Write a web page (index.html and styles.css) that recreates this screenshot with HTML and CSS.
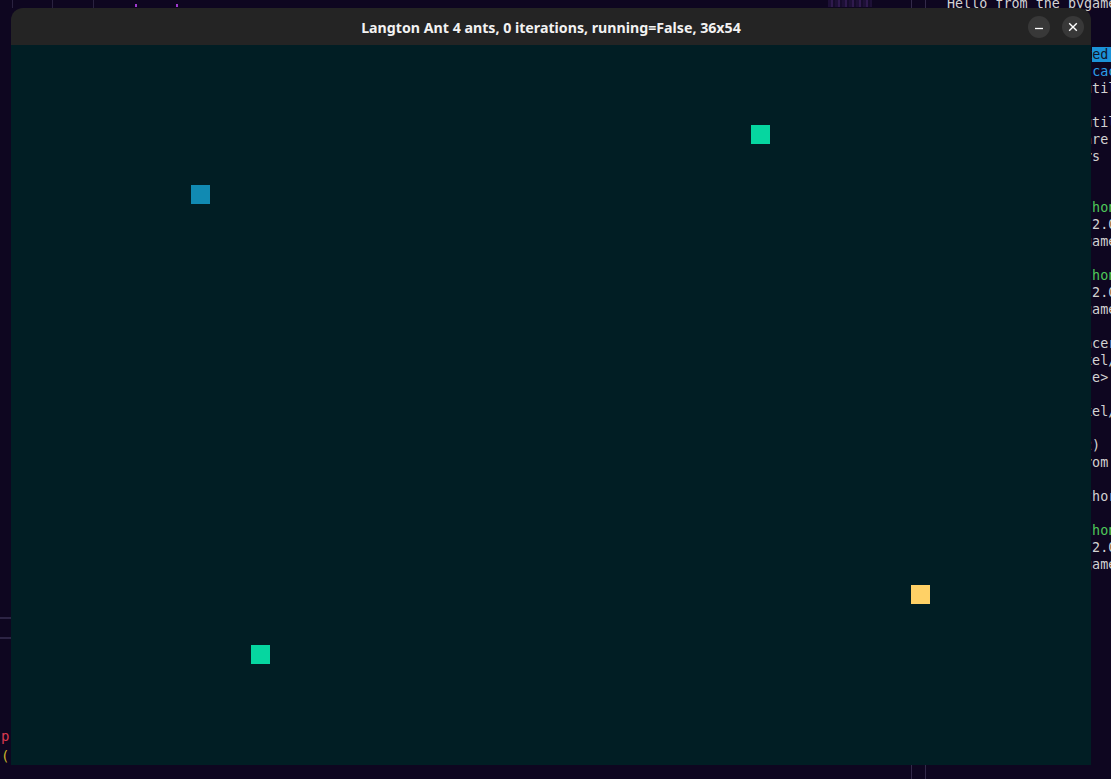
FILE: index.html
```html
<!DOCTYPE html>
<html lang="en">
<head>
<meta charset="utf-8">
<title>Langton Ant</title>
<link rel="stylesheet" href="styles.css">
</head>
<body>
<div class="desktop">
  <div class="left-pane">
    <div class="rule"></div>
    <div class="rule"></div>
    <div class="code"><span class="red">p</span>
<span class="yellow">(</span></div>
  </div>
  <div class="top-strip">
    <span class="vline l1"></span>
    <span class="vline l2"></span>
    <span class="vline l3"></span>
    <span class="dot d1"></span>
    <span class="dot d2"></span>
    <span class="smudge"></span>
  </div>
  <div class="divider d-a"></div>
  <div class="divider d-b"></div>
  <div class="terminal">Hello from the pygame community.
pygame 2.6.1 (SDL)

Successfully updat<span class="hl">ed pygame</span>
Collecting pygame <span class="blue">cached</span>
     from pygame.util

     from pygame.util
  Make sure they are
Loaded 4 ant colors 'f


<span class="green">dev@ubuntu:~/a/python</span>
pygame 2.6.1 (SDL 2.0.2
Hello from the pygame

<span class="green">dev@ubuntu:~/a/python</span>
pygame 2.6.1 (SDL 2.0.2
Hello from the pygame

    Ant 0 is a dancer
Path: /home/ux/pixel/a
line 42, in &lt;module&gt;

Path: /home/ux/pixel/g

Ant(x=37, y=4, c=2)
QUIT event came from w

  Credits: the authors

<span class="green">dev@ubuntu:~/a/python</span>
pygame 2.6.1 (SDL 2.0.2
Hello from the pygame</div>
</div>

<div class="window">
  <header class="titlebar">
    <div class="title">Langton Ant 4 ants, 0 iterations, running=False, 36x54</div>
    <div class="controls">
      <button class="btn" aria-label="Minimize">
        <svg width="10" height="10" viewBox="0 0 10 10"><path d="M1 6.5h8" stroke="#fff" stroke-width="1.3"/></svg>
      </button>
      <button class="btn" aria-label="Close">
        <svg width="10" height="10" viewBox="0 0 10 10"><path d="M1.2 1.2l7.6 7.6M8.8 1.2l-7.6 7.6" stroke="#fff" stroke-width="1.4"/></svg>
      </button>
    </div>
  </header>
  <main class="grid">
    <div class="ant ant-blue" style="grid-column:10;grid-row:8"></div>
    <div class="ant ant-green" style="grid-column:38;grid-row:5"></div>
    <div class="ant ant-yellow" style="grid-column:46;grid-row:28"></div>
    <div class="ant ant-green" style="grid-column:13;grid-row:31"></div>
  </main>
</div>
</body>
</html>
```

FILE: styles.css
```css
* { box-sizing: border-box; }

html, body {
  margin: 0;
  padding: 0;
  width: 1111px;
  height: 779px;
  overflow: hidden;
  background: #0e0620;
}

body { position: relative; }

.desktop {
  position: absolute;
  inset: 0;
}

/* background terminal panes */
.left-pane {
  position: absolute;
  left: 0;
  top: 0;
  width: 11px;
  height: 779px;
  padding-top: 617px;
  overflow: hidden;
}
.rule {
  height: 2px;
  background: #2c2444;
  margin-bottom: 18px;
}
.code {
  margin-top: 87px;
  white-space: pre;
  font-family: "DejaVu Sans Mono", monospace;
  font-size: 14px;
  line-height: 20px;
  padding-left: 1px;
}
.red { color: #d8394f; }
.yellow { color: #c9b22a; }

.top-strip {
  position: absolute;
  left: 0;
  top: 0;
  width: 1111px;
  height: 8px;
}
.vline {
  position: absolute;
  top: 0;
  width: 1px;
  height: 8px;
  background: #2a2240;
}
.l1 { left: 12px; }
.l2 { left: 52px; }
.l3 { left: 93px; }
.dot {
  position: absolute;
  top: 4px;
  width: 2px;
  height: 3px;
  background: #a03ad0;
}
.d1 { left: 135px; }
.d2 { left: 176px; }
.smudge {
  position: absolute;
  left: 828px;
  top: 0;
  width: 44px;
  height: 7px;
  background: repeating-linear-gradient(90deg, #2a1848 0 3px, #4a2a72 3px 5px, #1c1034 5px 7px);
  opacity: .55;
}

.divider {
  position: absolute;
  top: 0;
  width: 1px;
  height: 779px;
  background: #332a4a;
}
.d-a { left: 911px; }
.d-b { left: 925px; }

.terminal {
  position: absolute;
  left: 947px;
  top: -5px;
  width: 164px;
  overflow: hidden;
  white-space: pre;
  font-family: "DejaVu Sans Mono", monospace;
  font-size: 13.4px;
  line-height: 17px;
  color: #d2d2d2;
}
.hl { background: #1b92d8; color: #10162a; }
.blue { color: #2c9fe8; }
.green { color: #4fc95a; }

/* pygame window */
.window {
  position: absolute;
  left: 11px;
  top: 8px;
  width: 1080px;
  display: flex;
  flex-direction: column;
}

.titlebar {
  position: relative;
  height: 37px;
  background: #242424;
  border-radius: 12px 12px 0 0;
  display: flex;
  align-items: center;
  justify-content: center;
}

.title {
  font-family: "Noto Sans", "DejaVu Sans", sans-serif;
  font-weight: 700;
  font-size: 14.2px;
  color: #f2f2f2;
  margin-top: 1px;
}

.controls {
  position: absolute;
  right: 7px;
  top: 8px;
  display: flex;
  gap: 12px;
}

.btn {
  width: 22px;
  height: 22px;
  border-radius: 50%;
  border: 0;
  padding: 0;
  background: #383838;
  display: flex;
  align-items: center;
  justify-content: center;
}

.grid {
  width: 1080px;
  height: 720px;
  background: #011e24;
  display: grid;
  grid-template-columns: repeat(54, 20px);
  grid-template-rows: repeat(36, 20px);
}

.ant {
  width: 19px;
  height: 19px;
}
.ant-blue { background: #118ab2; }
.ant-green { background: #06d6a0; }
.ant-yellow { background: #ffd166; }
```
